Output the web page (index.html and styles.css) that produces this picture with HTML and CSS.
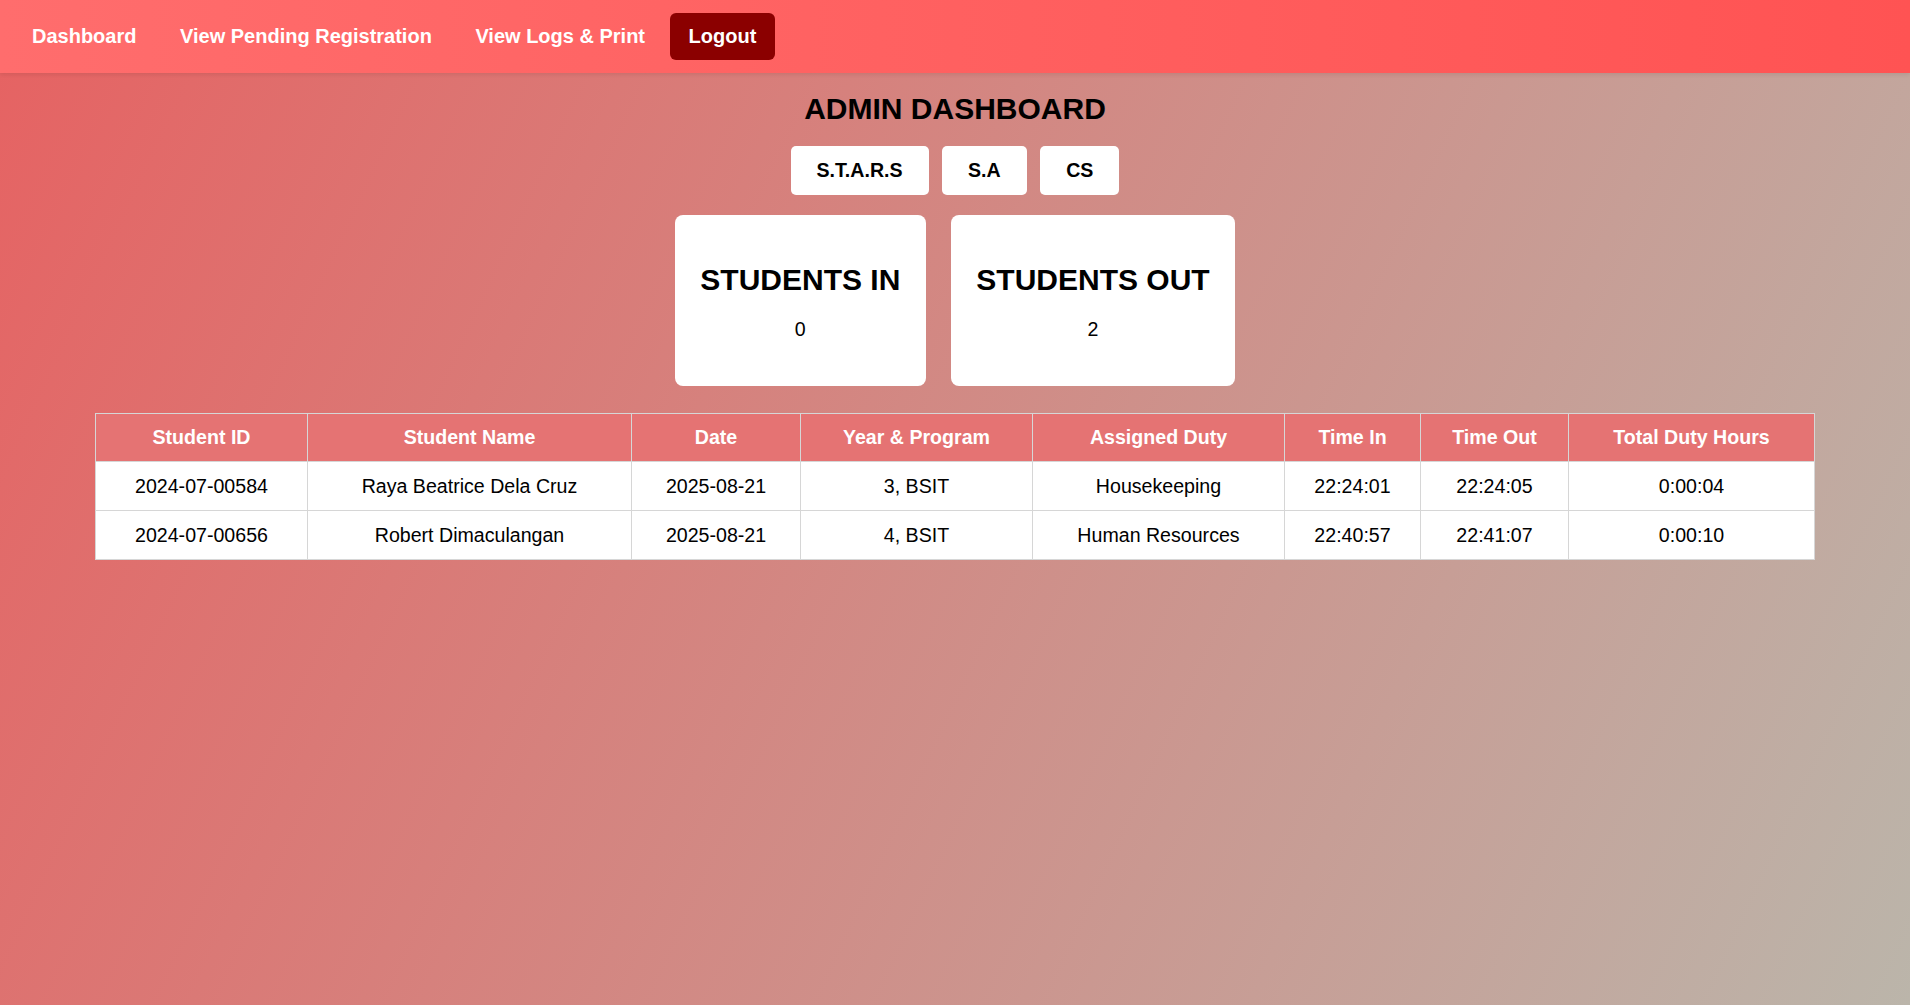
FILE: index.html
```html
<!DOCTYPE html>
<html lang="en">
<head>
<meta charset="utf-8">
<title>Admin Dashboard</title>
<link rel="stylesheet" href="styles.css">
</head>
<body>
<nav class="navbar">
  <a class="nav-link" href="#">Dashboard</a>
  <a class="nav-link" href="#">View Pending Registration</a>
  <a class="nav-link" href="#">View Logs &amp; Print</a>
  <a class="nav-link logout" href="#">Logout</a>
</nav>
<main class="main">
  <h2 class="title">ADMIN DASHBOARD</h2>
  <div class="filters">
    <button class="filter-btn">S.T.A.R.S</button>
    <button class="filter-btn">S.A</button>
    <button class="filter-btn">CS</button>
  </div>
  <div class="cards">
    <div class="card">
      <h3 class="card-title">STUDENTS IN</h3>
      <p class="card-value">0</p>
    </div>
    <div class="card">
      <h3 class="card-title">STUDENTS OUT</h3>
      <p class="card-value">2</p>
    </div>
  </div>
  <table class="logs">
    <thead>
      <tr>
        <th class="c-id">Student ID</th>
        <th class="c-name">Student Name</th>
        <th class="c-date">Date</th>
        <th class="c-year">Year &amp; Program</th>
        <th class="c-duty">Assigned Duty</th>
        <th class="c-in">Time In</th>
        <th class="c-out">Time Out</th>
        <th class="c-total">Total Duty Hours</th>
      </tr>
    </thead>
    <tbody>
      <tr>
        <td>2024-07-00584</td>
        <td>Raya Beatrice Dela Cruz</td>
        <td>2025-08-21</td>
        <td>3, BSIT</td>
        <td>Housekeeping</td>
        <td>22:24:01</td>
        <td>22:24:05</td>
        <td>0:00:04</td>
      </tr>
      <tr>
        <td>2024-07-00656</td>
        <td>Robert Dimaculangan</td>
        <td>2025-08-21</td>
        <td>4, BSIT</td>
        <td>Human Resources</td>
        <td>22:40:57</td>
        <td>22:41:07</td>
        <td>0:00:10</td>
      </tr>
    </tbody>
  </table>
</main>
</body>
</html>
```
FILE: styles.css
```css
* { box-sizing: border-box; }

html, body {
  margin: 0;
  padding: 0;
}

body {
  min-height: 100vh;
  font-family: "Liberation Sans", Arial, sans-serif;
  font-size: 19.6px;
  color: #000;
  background: linear-gradient(115deg, #e66262 0%, #bbb5aa 100%);
}

.navbar {
  display: flex;
  align-items: center;
  gap: 5.5px;
  height: 73px;
  padding: 0 13px;
  background: linear-gradient(to right, #ff6d6d, #ff5353);
  box-shadow: 0 2px 4px rgba(0, 0, 0, 0.08);
}

.nav-link {
  display: block;
  padding: 12px 19px;
  font-size: 20px;
  line-height: 23px;
  font-weight: bold;
  color: #fff;
  text-decoration: none;
  border-radius: 6px;
}

.logout {
  background: #8b0000;
}

.main {
  padding-top: 18.5px;
  display: flex;
  flex-direction: column;
  align-items: center;
}

.title {
  margin: 0 0 20px;
  font-size: 30px;
  line-height: 34.5px;
  font-weight: bold;
}

.filters {
  display: flex;
  gap: 13.5px;
  margin-bottom: 20px;
}

.filter-btn {
  font-family: "Liberation Sans", Arial, sans-serif;
  font-size: 19.6px;
  line-height: 23px;
  font-weight: bold;
  color: #000;
  background: #fff;
  border: none;
  border-radius: 5px;
  padding: 13px 26px;
}

.cards {
  display: flex;
  gap: 25px;
  margin-bottom: 27px;
}

.card {
  background: #fff;
  border-radius: 8px;
  padding: 26px 25.5px;
  text-align: center;
}

.card-title {
  margin: 21.5px 0 20.5px;
  font-size: 30px;
  line-height: 34.5px;
  font-weight: bold;
}

.card-value {
  margin: 0 0 19.5px;
  line-height: 22.5px;
}

.logs {
  width: 90%;
  border-collapse: collapse;
  table-layout: fixed;
  background: #fff;
}

.logs th,
.logs td {
  border: 1px solid #d6d6d6;
  padding: 12px 6px;
  line-height: 23px;
  text-align: center;
  white-space: nowrap;
}

.logs th {
  background: #e57373;
  color: #fff;
  font-weight: bold;
}

.logs td {
  padding: 13px 6px 12px;
}

.c-id { width: 212px; }
.c-name { width: 324px; }
.c-date { width: 169px; }
.c-year { width: 232px; }
.c-duty { width: 252px; }
.c-in { width: 136px; }
.c-out { width: 148px; }
.c-total { width: 246px; }
```
